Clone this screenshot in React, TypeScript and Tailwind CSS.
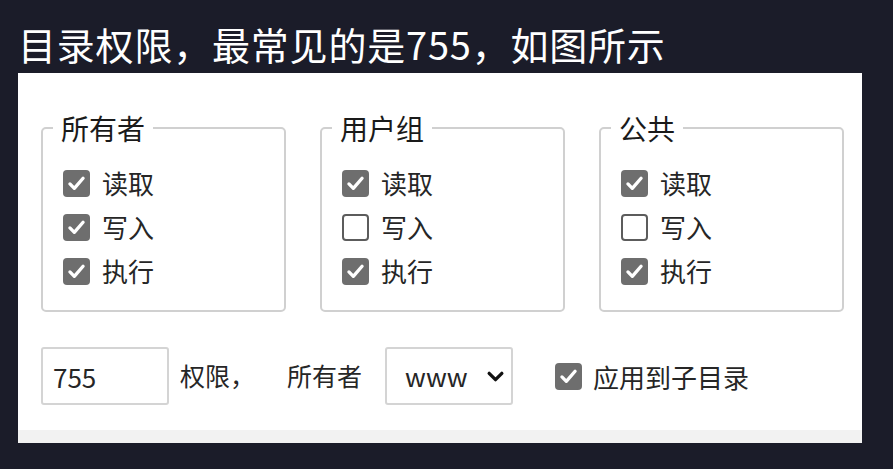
const Box = ({ checked }: { checked: boolean }) =>
  checked ? (
    <span className="flex h-[27px] w-[27px] shrink-0 items-center justify-center rounded-[4px] bg-[#6e6e6e]">
      <svg viewBox="0 0 24 24" className="h-[21px] w-[21px]" fill="none">
        <path d="M4.5 12.5l5 5L19.5 6" stroke="#fff" strokeWidth="3.8" strokeLinecap="round" strokeLinejoin="round" />
      </svg>
    </span>
  ) : (
    <span className="h-[27px] w-[27px] shrink-0 rounded-[4px] border-2 border-[#5c5c5c] bg-white" />
  );

const Row = ({ label, checked }: { label: string; checked: boolean }) => (
  <label className="flex h-[44px] items-center gap-[12px]">
    <Box checked={checked} />
    <span className="text-[26px] leading-none text-[#262626]">{label}</span>
  </label>
);

const groups = [
  { title: "所有者", perms: [true, true, true] },
  { title: "用户组", perms: [true, false, true] },
  { title: "公共", perms: [true, false, true] },
];

const names = ["读取", "写入", "执行"];

export default function App() {
  return (
    <div
      className="h-[469px] w-[893px] overflow-hidden bg-[#1b1c29] pl-[18px]"
      style={{ fontFamily: '"Noto Sans CJK SC", "Noto Sans", sans-serif' }}
    >
      <h1 className="pt-[20px] text-[38px] leading-[47px] font-normal tracking-[0.8px] text-white">
        目录权限，最常见的是755，如图所示
      </h1>

      <div className="mt-[6px] w-[844px] bg-white">
        <div className="pt-[40px] pr-[18px] pb-[25px] pl-[23px]">
          <div className="flex gap-[34px]">
            {groups.map((g) => (
              <fieldset
                key={g.title}
                className="w-[245px] shrink-0 rounded-[5px] border-2 border-[#d0d0d0] pr-4 pb-[17px] pl-[20px]"
              >
                <legend className="-ml-[10px] px-[8px] text-[28px] leading-[30px] text-[#1a1a1a]">
                  {g.title}
                </legend>
                <div className="pt-[18px]">
                  {names.map((n, i) => (
                    <Row key={n} label={n} checked={g.perms[i]} />
                  ))}
                </div>
              </fieldset>
            ))}
          </div>

          <div className="mt-[35px] flex items-center text-[25px] text-[#262626]">
            <div className="flex h-[58px] w-[128px] items-center rounded-[3px] border-2 border-[#d4d4d4] pl-[10px] text-[26px]">
              755
            </div>
            <span className="ml-[11px]">权限，</span>
            <span className="ml-[32px]">所有者</span>
            <div className="ml-[23px] flex h-[58px] w-[128px] items-center rounded-[3px] border-2 border-[#d4d4d4] pl-[18px]">
              <span className="text-[26px] leading-none">www</span>
              <svg viewBox="0 0 24 24" className="ml-[18px] h-[19px] w-[19px]" fill="none">
                <path d="M4 8l8 8 8-8" stroke="#111" strokeWidth="4.2" strokeLinecap="round" strokeLinejoin="round" />
              </svg>
            </div>
            <label className="ml-[42px] flex items-center gap-[11px]">
              <Box checked />
              <span className="text-[26px]">应用到子目录</span>
            </label>
          </div>
        </div>
        <div className="h-[13px] bg-[#f2f2f2]" />
      </div>
    </div>
  );
}
